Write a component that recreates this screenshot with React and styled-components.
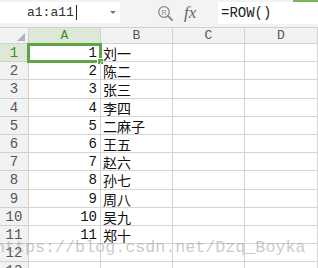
import React from "react";
import styled, { createGlobalStyle } from "styled-components";

const names = ["刘一", "陈二", "张三", "李四", "二麻子", "王五", "赵六", "孙七", "周八", "吴九", "郑十"];
const rowHeights = [18, 18, 19, 18, 18, 18, 18, 19, 18, 18, 18, 18, 18];
const columns = ["A", "B", "C", "D"];

const GlobalStyle = createGlobalStyle`
    html, body {
        margin: 0;
        padding: 0;
        background: #ffffff;
        overflow: hidden;
    }
`;

const Page = styled.div`
    position: relative;
    width: 318px;
    height: 268px;
    overflow: hidden;
    background: #ffffff;
    font-family: "Liberation Mono", "Noto Sans CJK SC", monospace;
`;

const TopStrip = styled.div`
    height: 2px;
    display: flex;
    justify-content: flex-end;
    background: #f3f3f3;
`;

const TabMark = styled.div`
    width: 25px;
    background: #7cb65a;
`;

const Toolbar = styled.div`
    height: 26px;
    box-sizing: border-box;
    display: flex;
    align-items: flex-start;
    background: #f3f3f3;
    border-bottom: 1px solid #cfcfcf;
`;

const NameBox = styled.div`
    width: 120px;
    height: 21px;
    box-sizing: border-box;
    background: #ffffff;
    display: flex;
    align-items: center;
    padding-left: 27px;
    font-size: 13px;
    color: #333;
`;

const Cursor = styled.span`
    width: 1px;
    height: 15px;
    margin-left: 2px;
    background: #222;
`;

const Caret = styled.span`
    margin-left: auto;
    margin-right: 4px;
    width: 0;
    height: 0;
    border-left: 3px solid transparent;
    border-right: 3px solid transparent;
    border-top: 3px solid #777;
`;

const Tools = styled.div`
    width: 98px;
    height: 22px;
    display: flex;
    align-items: center;
    padding-left: 37px;
    box-sizing: border-box;
    gap: 11px;
`;

const Fx = styled.span`
    font-family: "Liberation Serif", serif;
    font-style: italic;
    font-size: 17px;
    color: #666;
    margin-top: -1px;
`;

const FormulaBox = styled.div`
    flex: 1;
    height: 22px;
    background: #ffffff;
    display: flex;
    align-items: center;
    padding-left: 3px;
    font-size: 14px;
    color: #222;
`;

const Grid = styled.div`
    display: grid;
    grid-template-columns: 29px 72px 72px 72px 73px;
`;

const Corner = styled.div`
    position: relative;
    height: 16px;
    box-sizing: border-box;
    background: #f2f2f2;
    border-right: 1px solid #d2d2d2;
    border-bottom: 1px solid #d2d2d2;

    &::after {
        content: "";
        position: absolute;
        right: 3px;
        bottom: 2px;
        width: 0;
        height: 0;
        border-left: 8px solid transparent;
        border-bottom: 8px solid #b4b4b4;
    }
`;

const ColHead = styled.div`
    height: 16px;
    box-sizing: border-box;
    display: flex;
    align-items: center;
    justify-content: center;
    font-size: 13px;
    color: ${p => p.active ? "#3d8f2c" : "#555"};
    background: ${p => p.active ? "#dde9d6" : "#f2f2f2"};
    border-right: 1px solid #d2d2d2;
    border-bottom: 1px solid ${p => p.active ? "#a9cf96" : "#d2d2d2"};
`;

const RowHead = styled.div`
    height: ${p => p.h}px;
    box-sizing: border-box;
    display: flex;
    align-items: center;
    justify-content: center;
    font-size: 14px;
    color: ${p => p.active ? "#3d8f2c" : "#555"};
    background: ${p => p.active ? "#dde9d6" : "#f2f2f2"};
    border-right: 1px solid ${p => p.active ? "#a9cf96" : "#d2d2d2"};
    border-bottom: 1px solid #d2d2d2;
`;

const Cell = styled.div`
    position: relative;
    height: ${p => p.h}px;
    box-sizing: border-box;
    display: flex;
    align-items: center;
    justify-content: ${p => p.num ? "flex-end" : "flex-start"};
    padding: ${p => p.num ? "0 3px 0 0" : "0 0 0 2px"};
    font-size: 14px;
    color: #111;
    white-space: nowrap;
    border-right: 1px solid #d4d4d4;
    border-bottom: 1px solid #d4d4d4;
`;

const CjkText = styled.span`
    font-family: "Noto Sans CJK SC", sans-serif;
    font-size: 14px;
`;

const Selection = styled.div`
    position: absolute;
    left: -2px;
    top: -1px;
    right: -2px;
    bottom: -2px;
    border: 3px solid #5fa546;
    pointer-events: none;
`;

const FillHandle = styled.div`
    position: absolute;
    right: -5px;
    bottom: -5px;
    width: 5px;
    height: 5px;
    background: #5fa546;
    border: 1px solid #ffffff;
`;

const Watermark = styled.div`
    position: absolute;
    left: -5px;
    top: 238px;
    font-family: "Liberation Mono", monospace;
    font-size: 16.7px;
    color: rgba(150, 150, 150, 0.5);
    white-space: nowrap;
    pointer-events: none;
`;

function ZoomIcon() {
    return (
        <svg width="16" height="16" viewBox="0 0 16 16">
            <circle cx="7" cy="7" r="5.3" fill="none" stroke="#8a8a8a" strokeWidth="1.3" />
            <text x="7" y="9.6" fontSize="7" textAnchor="middle" fill="#8a8a8a" fontFamily="Liberation Sans, sans-serif">R</text>
            <line x1="11" y1="11" x2="15" y2="15" stroke="#8a8a8a" strokeWidth="2" strokeLinecap="round" />
        </svg>
    );
}

export default function App() {
    return (
        <Page>
            <GlobalStyle />
            <TopStrip><TabMark /></TopStrip>
            <Toolbar>
                <NameBox>
                    a1:a11<Cursor />
                    <Caret />
                </NameBox>
                <Tools>
                    <ZoomIcon />
                    <Fx>fx</Fx>
                </Tools>
                <FormulaBox>=ROW()</FormulaBox>
            </Toolbar>
            <Grid>
                <Corner />
                {columns.map(c => (
                    <ColHead key={c} active={c === "A"}>{c}</ColHead>
                ))}
                {rowHeights.map((h, i) => (
                    <React.Fragment key={i}>
                        <RowHead h={h} active={i === 0}>{i + 1}</RowHead>
                        <Cell h={h} num>
                            {i < names.length ? i + 1 : ""}
                            {i === 0 && <Selection><FillHandle /></Selection>}
                        </Cell>
                        <Cell h={h}>
                            {i < names.length && <CjkText>{names[i]}</CjkText>}
                        </Cell>
                        <Cell h={h} />
                        <Cell h={h} />
                    </React.Fragment>
                ))}
            </Grid>
            <Watermark>https://blog.csdn.net/Dzq_Boyka</Watermark>
        </Page>
    );
}
